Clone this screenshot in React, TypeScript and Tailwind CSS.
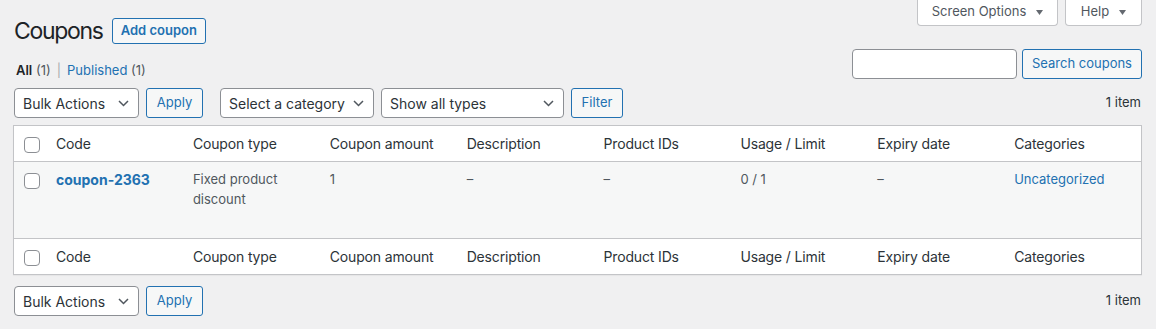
import React from "react";

const font = { fontFamily: "Inter, 'Noto Sans', 'Liberation Sans', sans-serif" };

function Chevron() {
  return (
    <svg width="11" height="7" viewBox="0 0 11 7" className="shrink-0">
      <polyline points="1,1 5.5,5.5 10,1" fill="none" stroke="#50575e" strokeWidth="1.5" />
    </svg>
  );
}

function Select({ label, w }: { label: string; w: string }) {
  return (
    <div className={`${w} h-[30px] flex items-center justify-between pl-[8px] pr-[9px] bg-white border border-[#8c8f94] rounded-[4px] text-[14px] text-[#2c3338]`}>
      <span>{label}</span>
      <Chevron />
    </div>
  );
}

function Btn({ label, w }: { label: string; w: string }) {
  return (
    <div className={`${w} h-[30px] flex items-center justify-center bg-[#f6f7f7] border border-[#2271b1] rounded-[3px] text-[13px] text-[#2271b1]`}>
      {label}
    </div>
  );
}

function Check() {
  return <div className="w-[16px] h-[16px] bg-white border border-[#8c8f94] rounded-[4px]" />;
}

function Tri() {
  return (
    <svg width="7" height="5" viewBox="0 0 7 5" className="ml-[10px]">
      <polygon points="0,0 7,0 3.5,5" fill="#646970" />
    </svg>
  );
}

const headers = ["Code", "Coupon type", "Coupon amount", "Description", "Product IDs", "Usage / Limit", "Expiry date", "Categories"];
const grid = "grid grid-cols-[32px_repeat(8,minmax(0,1fr))]";

function HeadRow({ border }: { border: string }) {
  return (
    <div className={`${grid} h-[36px] items-center bg-white ${border} border-[#c3c4c7]`}>
      <div className="pl-[10px] pt-[2px]"><Check /></div>
      {headers.map((h) => (
        <div key={h} className="px-[10px] text-[14px] tracking-[-0.15px] text-[#2c3338] whitespace-nowrap">{h}</div>
      ))}
    </div>
  );
}

export default function App() {
  return (
    <div style={font} className="w-[1156px] h-[329px] bg-[#f0f0f1] overflow-hidden text-[#1d2327]">
      <div className="px-[14px]">
        {/* title row */}
        <div className="flex justify-between items-start h-[49px]">
          <div className="flex items-center gap-[9px] pt-[16px]">
            <h1 className="text-[23px] leading-[30px] font-normal tracking-[-1.3px] text-[#1d2327]">Coupons</h1>
            <div className="h-[26px] px-[8px] flex items-center bg-[#f6f7f7] border border-[#2271b1] rounded-[3px] text-[13px] font-semibold text-[#2271b1]">Add coupon</div>
          </div>
          <div className="flex gap-[7px]">
            <div className="w-[141px] h-[26px] flex items-center justify-center bg-white border border-t-0 border-[#c3c4c7] rounded-b-[4px] text-[13px] text-[#50575e] pb-[1px]">
              Screen Options<Tri />
            </div>
            <div className="w-[77px] h-[26px] flex items-center justify-center bg-white border border-t-0 border-[#c3c4c7] rounded-b-[4px] text-[13px] text-[#50575e] pb-[1px]">
              Help<Tri />
            </div>
          </div>
        </div>
        {/* views + search */}
        <div className="flex justify-between h-[30px]">
          <div className="mt-[11px] leading-[20px] text-[13px] pl-[2px]">
            <span className="font-semibold text-[#1d2327]">All</span>
            <span className="text-[#50575e]"> (1)</span>
            <span className="text-[#a7aaad] mx-[6px]">|</span>
            <span className="text-[#2271b1]">Published</span>
            <span className="text-[#50575e]"> (1)</span>
          </div>
          <div className="flex gap-[5px]">
            <div className="w-[165px] h-[30px] bg-white border border-[#8c8f94] rounded-[4px]" />
            <div className="w-[120px] h-[30px] flex items-center justify-center bg-[#f6f7f7] border border-[#2271b1] rounded-[3px] text-[13px] text-[#2271b1]">Search coupons</div>
          </div>
        </div>
        {/* top tablenav */}
        <div className="flex items-center justify-between mt-[9px] h-[30px]">
          <div className="flex items-center">
            <Select label="Bulk Actions" w="w-[125px]" />
            <div className="ml-[7px]"><Btn label="Apply" w="w-[57px]" /></div>
            <div className="ml-[17px]"><Select label="Select a category" w="w-[154px]" /></div>
            <div className="ml-[7px]"><Select label="Show all types" w="w-[183px]" /></div>
            <div className="ml-[7px]"><Btn label="Filter" w="w-[52px]" /></div>
          </div>
          <div className="text-[13px] text-[#2c3338] pr-[1px]">1 item</div>
        </div>
        {/* table */}
        <div className="mt-[7px] -ml-px bg-white border border-[#c3c4c7] shadow-[0_1px_1px_rgba(0,0,0,0.04)]">
          <HeadRow border="border-b" />
          <div className={`${grid} h-[76px] bg-[#f6f7f7] items-start text-[13px] leading-[19.5px] text-[#50575e]`}>
            <div className="pl-[10px] pt-[11px]"><Check /></div>
            <div className="px-[10px] pt-[8px] text-[14px] font-bold text-[#2271b1]">coupon-2363</div>
            <div className="px-[10px] pt-[8px] w-[130px]">Fixed product discount</div>
            <div className="px-[10px] pt-[8px]">1</div>
            <div className="px-[10px] pt-[8px]">–</div>
            <div className="px-[10px] pt-[8px]">–</div>
            <div className="px-[10px] pt-[8px]">0 / 1</div>
            <div className="px-[10px] pt-[8px]">–</div>
            <div className="px-[10px] pt-[8px] text-[#2271b1]">Uncategorized</div>
          </div>
          <HeadRow border="border-t" />
        </div>
        {/* bottom tablenav */}
        <div className="flex items-center justify-between mt-[11px] h-[30px]">
          <div className="flex items-center">
            <Select label="Bulk Actions" w="w-[125px]" />
            <div className="ml-[7px]"><Btn label="Apply" w="w-[57px]" /></div>
          </div>
          <div className="text-[13px] text-[#2c3338] pr-[1px]">1 item</div>
        </div>
      </div>
    </div>
  );
}
